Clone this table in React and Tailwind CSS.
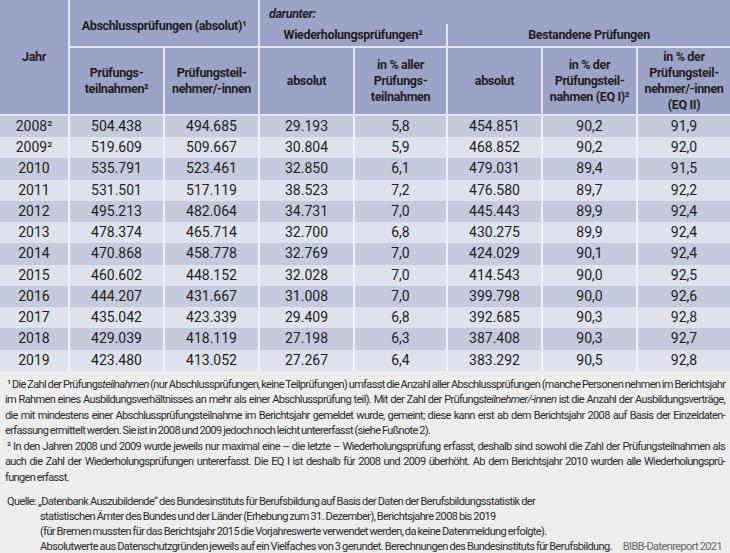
import React from "react";

const rows = [
    ["2008²", "504.438", "494.685", "29.193", "5,8", "454.851", "90,2", "91,9"],
    ["2009²", "519.609", "509.667", "30.804", "5,9", "468.852", "90,2", "92,0"],
    ["2010", "535.791", "523.461", "32.850", "6,1", "479.031", "89,4", "91,5"],
    ["2011", "531.501", "517.119", "38.523", "7,2", "476.580", "89,7", "92,2"],
    ["2012", "495.213", "482.064", "34.731", "7,0", "445.443", "89,9", "92,4"],
    ["2013", "478.374", "465.714", "32.700", "6,8", "430.275", "89,9", "92,4"],
    ["2014", "470.868", "458.778", "32.769", "7,0", "424.029", "90,1", "92,4"],
    ["2015", "460.602", "448.152", "32.028", "7,0", "414.543", "90,0", "92,5"],
    ["2016", "444.207", "431.667", "31.008", "7,0", "399.798", "90,0", "92,6"],
    ["2017", "435.042", "423.339", "29.409", "6,8", "392.685", "90,3", "92,8"],
    ["2018", "429.039", "418.119", "27.198", "6,3", "387.408", "90,3", "92,7"],
    ["2019", "423.480", "413.052", "27.267", "6,4", "383.292", "90,5", "92,8"],
];

const widths = [69, 95, 95, 95, 93, 95, 95, 93];

function Line({ children, last }) {
    return (
        <div className={last ? "whitespace-nowrap" : "whitespace-nowrap text-justify [text-align-last:justify]"}>
            {children}
        </div>
    );
}

export default function App() {
    const th = "border-[#e4e7f0] font-bold text-center align-middle px-[2px]";
    return (
        <div className="w-[730px] h-[553px] overflow-hidden bg-[#ededed] text-[#1e1e1e] font-['Roboto',sans-serif]">
            <table className="w-[730px] table-fixed border-collapse">
                <colgroup>
                    {widths.map((w, i) => (
                        <col key={i} style={{ width: w }} />
                    ))}
                </colgroup>
                <thead className="bg-[#9ba4c6] text-[12.5px] leading-[16px] tracking-[-0.35px]">
                    <tr className="h-[24px]">
                        <th rowSpan={3} className={`${th} border-b-2`}>Jahr</th>
                        <th rowSpan={2} colSpan={2} className={`${th} border-l-2 border-b-2 pt-[5px]`}>
                            Abschlussprüfungen (absolut)¹
                        </th>
                        <th colSpan={5} className="border-l-2 border-[#e4e7f0] text-left pl-[9px] pt-[4px] italic font-bold align-middle">
                            darunter:
                        </th>
                    </tr>
                    <tr className="h-[23px]">
                        <th colSpan={2} className={`${th} border-l-2 border-b-2`}>Wiederholungsprüfungen²</th>
                        <th colSpan={3} className={`${th} border-l-2 border-b-2`}>Bestandene Prüfungen</th>
                    </tr>
                    <tr className="h-[68px]">
                        <th className={`${th} border-l-2 border-b-2`}>
                            Prüfungs-<br />teilnahmen²
                        </th>
                        <th className={`${th} border-l-2 border-b-2`}>
                            Prüfungsteil-<br />nehmer/-innen
                        </th>
                        <th className={`${th} border-l-2 border-b-2`}>absolut</th>
                        <th className={`${th} border-l-2 border-b-2`}>
                            in % aller<br />Prüfungs-<br />teilnahmen
                        </th>
                        <th className={`${th} border-l-2 border-b-2`}>absolut</th>
                        <th className={`${th} border-l-2 border-b-2`}>
                            in % der<br />Prüfungsteil-<br />nahmen (EQ I)²
                        </th>
                        <th className={`${th} border-l-2 border-b-2`}>
                            in % der<br />Prüfungsteil-<br />nehmer/-innen<br />(EQ II)
                        </th>
                    </tr>
                </thead>
                <tbody className="text-[14px]">
                    {rows.map((r, i) => (
                        <tr key={r[0]} className={`h-[21.25px] ${i % 2 === 0 ? "bg-[#c5cadd]" : "bg-[#dfe2ed]"}`}>
                            {r.map((c, j) => (
                                <td
                                    key={j}
                                    className={`text-center align-middle p-0 leading-[21px] ${j > 0 ? "border-l-2 border-[#eef0f6]" : ""}`}
                                >
                                    {c}
                                </td>
                            ))}
                        </tr>
                    ))}
                </tbody>
            </table>

            <div className="px-[5px] pt-[6px] text-[11px] leading-[15.5px] tracking-[-0.65px] [word-spacing:-0.5px] text-[#2a2a2a]">
                <Line>
                    <span className="pl-[2px]">¹ Die Zahl der Prüfungs<i>teilnahmen</i></span> (nur Abschlussprüfungen, keine Teilprüfungen) umfasst die Anzahl aller Abschlussprüfungen (manche Personen nehmen im Berichtsjahr
                </Line>
                <Line>
                    im Rahmen eines Ausbildungsverhältnisses an mehr als einer Abschlussprüfung teil). Mit der Zahl der Prüfungs<i>teilnehmer/-innen</i> ist die Anzahl der Ausbildungsverträge,
                </Line>
                <Line>
                    die mit mindestens einer Abschlussprüfungsteilnahme im Berichtsjahr gemeldet wurde, gemeint; diese kann erst ab dem Berichtsjahr 2008 auf Basis der Einzeldaten-
                </Line>
                <Line last>
                    erfassung ermittelt werden. Sie ist in 2008 und 2009 jedoch noch leicht untererfasst (siehe Fußnote 2).
                </Line>
                <Line>
                    <span className="pl-[2px]">² In den Jahren 2008 und 2009 wurde jeweils nur maximal eine – die letzte – Wiederholungsprüfung erfasst, deshalb sind sowohl die Zahl der Prüfungsteilnahmen als</span>
                </Line>
                <Line>
                    auch die Zahl der Wiederholungsprüfungen untererfasst. Die EQ I ist deshalb für 2008 und 2009 überhöht. Ab dem Berichtsjahr 2010 wurden alle Wiederholungsprü-
                </Line>
                <Line last>fungen erfasst.</Line>

                <div className="mt-[9px] leading-[15px] tracking-[-0.6px]">
                    <div className="whitespace-nowrap pl-[2px]">
                        <span className="inline-block w-[31px]">Quelle:</span>„Datenbank Auszubildende“ des Bundesinstituts für Berufsbildung auf Basis der Daten der Berufsbildungsstatistik der
                    </div>
                    <div className="whitespace-nowrap pl-[35px]">statistischen Ämter des Bundes und der Länder (Erhebung zum 31. Dezember), Berichtsjahre 2008 bis 2019</div>
                    <div className="whitespace-nowrap pl-[35px]">(für Bremen mussten für das Berichtsjahr 2015 die Vorjahreswerte verwendet werden, da keine Datenmeldung erfolgte).</div>
                    <div className="flex justify-between pl-[35px]">
                        <span className="whitespace-nowrap">Absolutwerte aus Datenschutzgründen jeweils auf ein Vielfaches von 3 gerundet. Berechnungen des Bundesinstituts für Berufsbildung.</span>
                        <span className="whitespace-nowrap text-[#666] pr-[3px]">BIBB-Datenreport 2021</span>
                    </div>
                </div>
            </div>
        </div>
    );
}
